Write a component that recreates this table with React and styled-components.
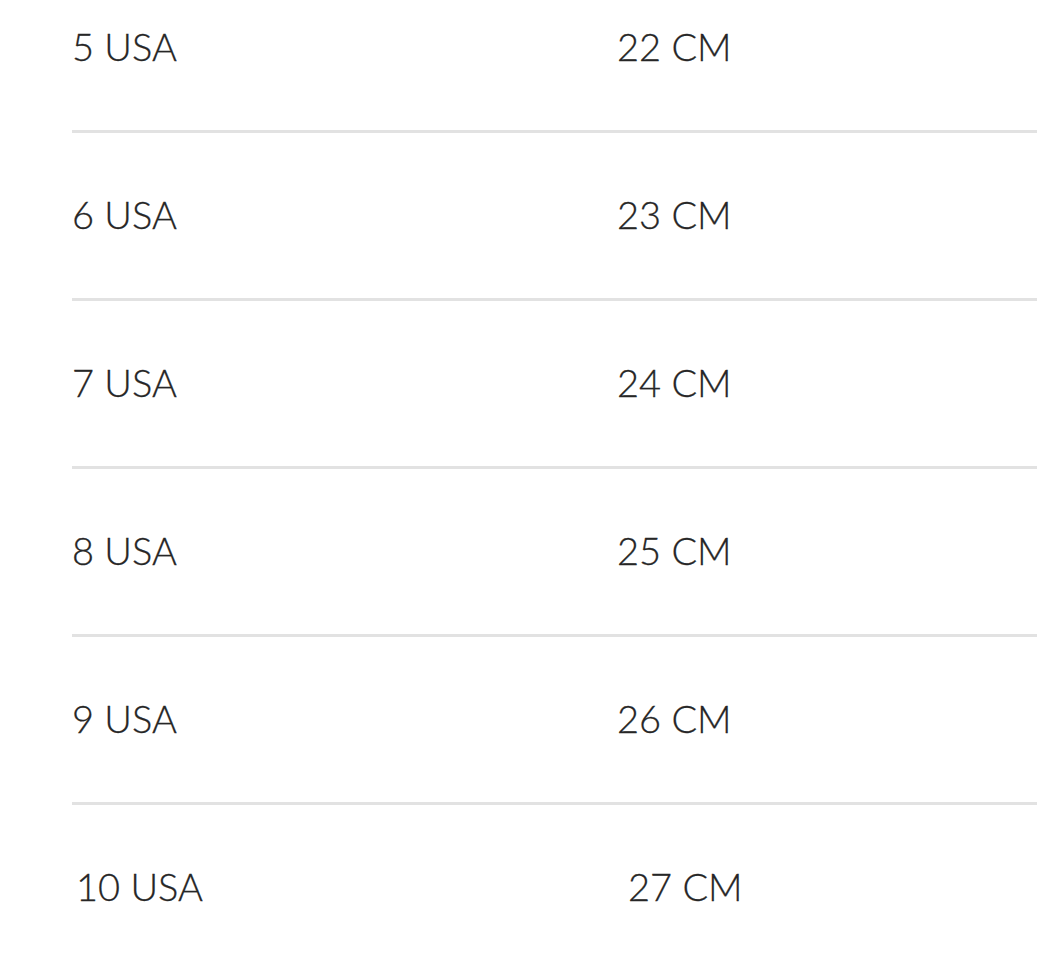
import styled, { createGlobalStyle } from "styled-components";

// Size chart: US shoe size against foot length.

const sizes = [
    { usa: "5 USA", cm: "22 CM" },
    { usa: "6 USA", cm: "23 CM" },
    { usa: "7 USA", cm: "24 CM" },
    { usa: "8 USA", cm: "25 CM" },
    { usa: "9 USA", cm: "26 CM" },
    { usa: "10 USA", cm: "27 CM", shifted: true },
];

const App = () => {
    return (
        <>
            <GlobalStyle />
            <Page>
                <Table>
                    {
                        sizes.map((item) => (
                            <Row key={item.usa} $shifted={item.shifted}>
                                <Cell>{item.usa}</Cell>
                                <Cell>{item.cm}</Cell>
                            </Row>
                        ))
                    }
                </Table>
            </Page>
        </>
    )
}

const GlobalStyle = createGlobalStyle`
    html, body {
        margin: 0;
        background: #ffffff;
        overflow: hidden;
    }
    body {
        font-family: Lato, "Noto Sans", sans-serif;
        color: #262626;
    }
`

const Page = styled.main`
    height: 963px;
    overflow: hidden;
    padding-left: 72px;
`

const Table = styled.div`
    display: flex;
    flex-direction: column;
    margin-top: -35px;
`

const Row = styled.div`
    display: grid;
    grid-template-columns: 545px 1fr;
    align-items: center;
    height: 165px;
    border-bottom: 3px solid #e2e2e2;
    padding-left: ${props => props.$shifted ? "4px" : "0"};
    > div:last-child {
        padding-left: ${props => props.$shifted ? "7px" : "0"};
    }
    &:last-child {
        border-bottom: none;
    }
`

const Cell = styled.div`
    font-size: 38px;
    font-weight: 300;
    line-height: 1;
    padding-bottom: 4px;
    -webkit-text-stroke: 0.3px #262626;
`

export default App;
